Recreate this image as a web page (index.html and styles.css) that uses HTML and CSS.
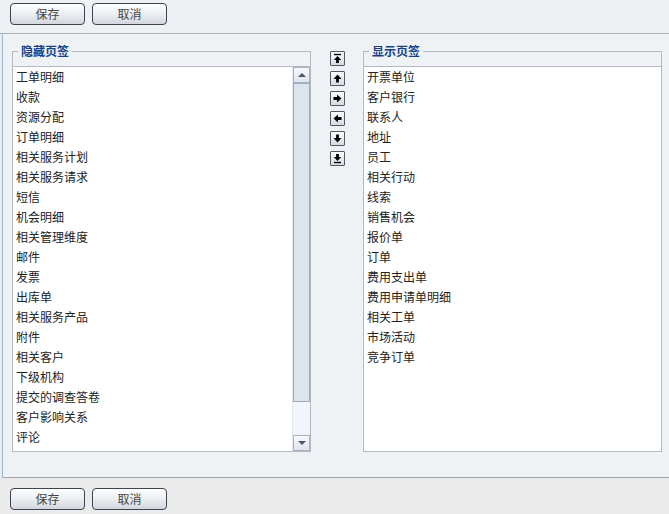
FILE: index.html
```html
<!DOCTYPE html>
<html lang="zh-CN">
<head>
    <meta charset="UTF-8">
    <title>页签设置</title>
    <link rel="stylesheet" href="styles.css">
</head>
<body>
    <div class="toolbar">
        <button class="btn">保存</button>
        <button class="btn">取消</button>
    </div>
    <div class="panel">
        <fieldset class="group group-left">
            <legend>隐藏页签</legend>
            <div class="listbox">
                <ul class="items">
                    <li>工单明细</li>
                    <li>收款</li>
                    <li>资源分配</li>
                    <li>订单明细</li>
                    <li>相关服务计划</li>
                    <li>相关服务请求</li>
                    <li>短信</li>
                    <li>机会明细</li>
                    <li>相关管理维度</li>
                    <li>邮件</li>
                    <li>发票</li>
                    <li>出库单</li>
                    <li>相关服务产品</li>
                    <li>附件</li>
                    <li>相关客户</li>
                    <li>下级机构</li>
                    <li>提交的调查答卷</li>
                    <li>客户影响关系</li>
                    <li>评论</li>
                </ul>
                <div class="scrollbar">
                    <div class="sb-btn"><span class="tri-up"></span></div>
                    <div class="sb-thumb"></div>
                    <div class="sb-track"></div>
                    <div class="sb-btn"><span class="tri-down"></span></div>
                </div>
            </div>
        </fieldset>
        <div class="movers">
            <button class="mv" title="置顶">
                <svg width="13" height="13" viewBox="0 0 13 13"><path d="M3 2.5h7" stroke="#000" stroke-width="1.4"/><path d="M6.5 4L2.8 8h2.3v3h2.8V8h2.3z" fill="#000"/></svg>
            </button>
            <button class="mv" title="上移">
                <svg width="13" height="13" viewBox="0 0 13 13"><path d="M6.5 2.5L2.5 7h2.6v3.5h2.8V7h2.6z" fill="#000"/></svg>
            </button>
            <button class="mv" title="添加">
                <svg width="13" height="13" viewBox="0 0 13 13"><path d="M10.5 6.5L6 2.5v2.6H2.5v2.8H6v2.6z" fill="#000"/></svg>
            </button>
            <button class="mv" title="移除">
                <svg width="13" height="13" viewBox="0 0 13 13"><path d="M2.5 6.5L7 2.5v2.6h3.5v2.8H7v2.6z" fill="#000"/></svg>
            </button>
            <button class="mv" title="下移">
                <svg width="13" height="13" viewBox="0 0 13 13"><path d="M6.5 10.5L2.5 6h2.6V2.5h2.8V6h2.6z" fill="#000"/></svg>
            </button>
            <button class="mv" title="置底">
                <svg width="13" height="13" viewBox="0 0 13 13"><path d="M6.5 9L2.8 5h2.3V2h2.8v3h2.3z" fill="#000"/><path d="M3 10.5h7" stroke="#000" stroke-width="1.4"/></svg>
            </button>
        </div>
        <fieldset class="group group-right">
            <legend>显示页签</legend>
            <div class="listbox">
                <ul class="items">
                    <li>开票单位</li>
                    <li>客户银行</li>
                    <li>联系人</li>
                    <li>地址</li>
                    <li>员工</li>
                    <li>相关行动</li>
                    <li>线索</li>
                    <li>销售机会</li>
                    <li>报价单</li>
                    <li>订单</li>
                    <li>费用支出单</li>
                    <li>费用申请单明细</li>
                    <li>相关工单</li>
                    <li>市场活动</li>
                    <li>竞争订单</li>
                </ul>
            </div>
        </fieldset>
    </div>
    <div class="footer">
        <button class="btn">保存</button>
        <button class="btn">取消</button>
    </div>
</body>
</html>
```

FILE: styles.css
```css
body {
    margin: 0;
    width: 669px;
    height: 514px;
    overflow: hidden;
    background-color: #ebebeb;
    font-family: "Noto Sans CJK SC", "Liberation Sans", sans-serif;
    font-size: 12px;
    color: #222;
}
.toolbar {
    height: 34px;
    box-sizing: border-box;
    padding: 3px 0 0 10px;
    background-color: #eef0f3;
    border-bottom: 1px solid #a9aeb6;
    display: flex;
    gap: 7px;
}
.btn {
    width: 75px;
    height: 22px;
    padding: 0;
    border: 1px solid #3c4450;
    border-radius: 4px;
    background: linear-gradient(#ffffff, #eef0f3 45%, #d3d7dd);
    font-family: inherit;
    font-size: 12px;
    line-height: 18px;
    color: #444;
    cursor: pointer;
}
.panel {
    height: 444px;
    box-sizing: border-box;
    margin-left: 2px;
    border-left: 1px solid #9db7dc;
    border-bottom: 1px solid #a2a6ad;
    background-color: #eff2f5;
    display: flex;
    align-items: flex-start;
    padding: 9px 0 0 9px;
}
.group {
    margin: 0;
    padding: 7px 0 0 0;
    border: 1px solid #b3b8c1;
    min-width: 0;
}
.group legend {
    margin-left: 5px;
    padding: 0 3px;
    font-weight: bold;
    font-size: 12px;
    line-height: 16px;
    color: #15428b;
}
.group-left {
    width: 299px;
    box-sizing: border-box;
}
.group-right {
    width: 299px;
    box-sizing: border-box;
}
.listbox {
    height: 385px;
    box-sizing: border-box;
    border-top: 1px solid #b3b8c1;
    background-color: #ffffff;
    display: flex;
}
.items {
    flex: 1;
    list-style: none;
    margin: 0;
    padding: 0 0 0 3px;
    overflow: hidden;
}
.items li {
    height: 20px;
    line-height: 19px;
    white-space: nowrap;
}
.scrollbar {
    width: 17px;
    display: flex;
    flex-direction: column;
    background-color: #f1f6fc;
    border-left: 1px solid #e2e8f0;
}
.sb-btn {
    height: 16px;
    box-sizing: border-box;
    border: 1px solid #a8b1bd;
    background: linear-gradient(#f7f9fc, #dfe5ee);
    display: flex;
    align-items: center;
    justify-content: center;
}
.tri-up {
    width: 0;
    height: 0;
    border-left: 4px solid transparent;
    border-right: 4px solid transparent;
    border-bottom: 4px solid #4d5866;
}
.tri-down {
    width: 0;
    height: 0;
    border-left: 4px solid transparent;
    border-right: 4px solid transparent;
    border-top: 4px solid #4d5866;
}
.sb-thumb {
    height: 319px;
    box-sizing: border-box;
    border: 1px solid #9ea9b9;
    background-color: #dde4ee;
}
.sb-track {
    flex: 1;
}
.movers {
    width: 52px;
    margin-top: 8px;
    display: flex;
    flex-direction: column;
    align-items: center;
    gap: 5px;
}
.mv {
    width: 15px;
    height: 15px;
    padding: 0;
    border: 1px solid #4f5863;
    border-radius: 1px;
    background: linear-gradient(#fbfcfd, #d6dbe2);
    display: flex;
    align-items: center;
    justify-content: center;
    cursor: pointer;
}
.mv svg {
    display: block;
}
.footer {
    padding: 10px 0 0 10px;
    display: flex;
    gap: 7px;
}
```
